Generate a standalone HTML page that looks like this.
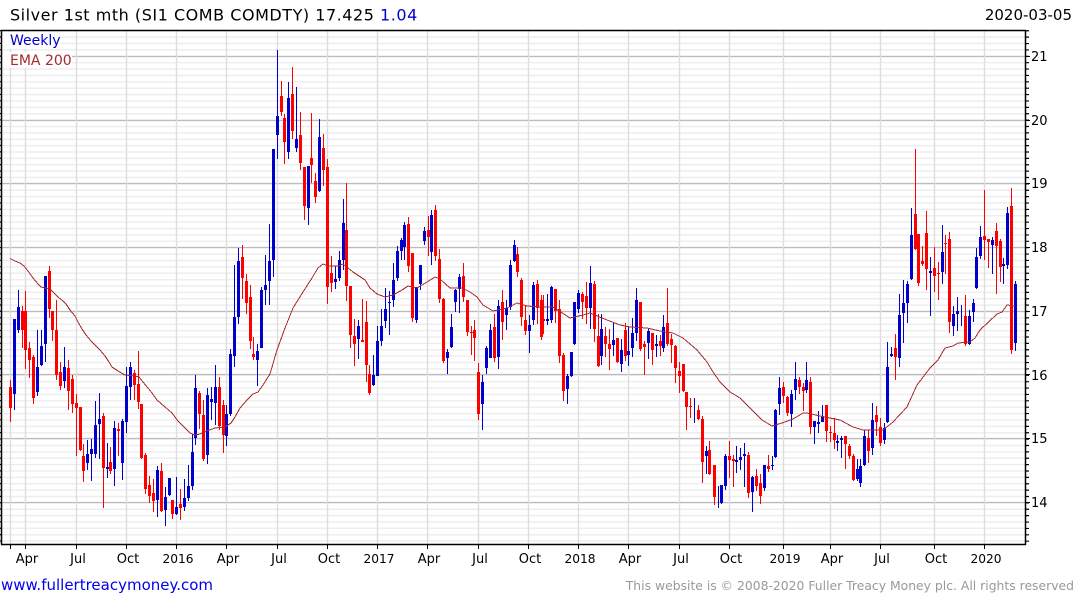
<!DOCTYPE html>
<html><head><meta charset="utf-8"><style>
html,body{margin:0;padding:0;background:#fff;width:1075px;height:600px;overflow:hidden}
svg{display:block}
text{font-family:"DejaVu Sans",sans-serif}
</style></head><body>
<svg width="1075" height="600" viewBox="0 0 1075 600" xmlns="http://www.w3.org/2000/svg">
<rect width="1075" height="600" fill="#fff"/>
<line x1="513.5" x2="513.5" y1="30.03" y2="544" stroke="#eee" stroke-width="1024" stroke-dasharray="1.5 4.88"/>
<path d="M2 56.5H1025M2 120.5H1025M2 183.5H1025M2 247.5H1025M2 311.5H1025M2 374.5H1025M2 438.5H1025M2 502.5H1025" stroke="#bbb" stroke-width="1.2" fill="none"/>
<path d="M10.5 31V544M25.5 31V544M76.5 31V544M126.5 31V544M176.5 31V544M226.5 31V544M277.5 31V544M327.5 31V544M377.5 31V544M427.5 31V544M478.5 31V544M528.5 31V544M578.5 31V544M628.5 31V544M679.5 31V544M729.5 31V544M783.5 31V544M830.5 31V544M880.5 31V544M934.5 31V544M984.5 31V544" stroke="#ddd" stroke-width="1.4" fill="none"/>

<g fill="none" stroke="#0000cc" stroke-width="1">
<path d="M14.5 319V410M18.5 290V333M37.5 330V396M41.5 330V366M45.5 276V362M64.5 347V388M87.5 440V470M91.5 439V481M95.5 401V458M99.5 393V459M107.5 443V478M114.5 421V486M122.5 419V480M126.5 367V433M130.5 362V400M157.5 466V517M165.5 487V526M169.5 478V496M176.5 477V515M184.5 479V511M188.5 465V501M192.5 434V490M195.5 375V445M207.5 388V464M211.5 387V420M215.5 365V425M226.5 405V446M230.5 349V416M234.5 265V367M238.5 248V324M257.5 344V386M261.5 287V348M265.5 255V305M269.5 224V305M273.5 149V277M277.5 50V159M288.5 82V159M296.5 87V152M308.5 166V225M319.5 119V192M335.5 266V289M339.5 251V281M343.5 199V270M358.5 320V359M373.5 355V386M377.5 326V376M381.5 309V346M385.5 288V328M389.5 291V335M393.5 263V307M397.5 246V281M401.5 238V260M404.5 222V260M416.5 287V323M420.5 265V290M424.5 227V245M431.5 210V265M447.5 349V374M451.5 314V348M455.5 289V312M459.5 274V313M482.5 375V430M486.5 346V374M490.5 324V358M498.5 300V369M506.5 300V330M510.5 260V310M514.5 240V262M529.5 315V353M533.5 282V325M547.5 294V325M551.5 286V323M567.5 374V404M571.5 352V377M574.5 302V345M578.5 290V313M590.5 266V329M601.5 314V365M613.5 323V356M621.5 339V372M628.5 327V366M632.5 318V357M636.5 288V341M648.5 329V359M656.5 335V357M663.5 315V352M694.5 398V423M706.5 446V474M718.5 486V508M721.5 485V504M725.5 454V490M736.5 446V473M740.5 448V470M744.5 443V487M752.5 476V512M764.5 465V491M772.5 456V470M775.5 409V458M779.5 377V415M791.5 390V427M795.5 362V400M806.5 362V393M814.5 421V444M818.5 411V433M822.5 405V422M837.5 435V451M841.5 436V458M857.5 459V481M860.5 459V487M864.5 430V466M872.5 403V455M884.5 423V444M887.5 342V423M891.5 347V357M899.5 294V367M903.5 280V343M907.5 281V323M911.5 208V280M930.5 257V316M942.5 225V284M953.5 306V336M957.5 297V331M961.5 305V326M969.5 310V345M973.5 299V322M976.5 248V289M980.5 226V259M992.5 237V274M1003.5 258V284M1007.5 207V269M1015.5 281V351"/>
</g>
<g fill="none" stroke="#ff0000" stroke-width="1">
<path d="M10.5 380V422M22.5 306V348M25.5 291V369M29.5 342V378M33.5 355V404M49.5 266V318M52.5 311V341M56.5 300V380M60.5 362V390M68.5 360V410M72.5 375V413M76.5 394V456M80.5 407V451M83.5 444V482M103.5 413V508M110.5 447V474M118.5 423V456M134.5 370V400M138.5 351V409M141.5 404V459M145.5 453V494M149.5 476V503M153.5 479V512M161.5 463V512M172.5 500V519M180.5 489V520M199.5 391V429M203.5 400V461M219.5 377V430M223.5 400V453M242.5 245V299M246.5 274V314M250.5 285V349M253.5 337V360M281.5 81V116M284.5 114V164M292.5 67V139M300.5 112V170M304.5 167V220M311.5 113V183M315.5 173V203M323.5 134V186M327.5 159V304M331.5 256V292M346.5 183V301M350.5 286V348M354.5 319V366M362.5 299V342M366.5 301V382M369.5 365V395M408.5 217V272M412.5 253V322M428.5 216V256M435.5 205V261M439.5 249V303M443.5 298V363M463.5 263V302M467.5 300V336M471.5 326V355M474.5 320V361M478.5 363V420M494.5 314V362M502.5 290V340M517.5 247V277M521.5 278V326M525.5 305V335M537.5 280V324M541.5 295V340M543.5 295V334M555.5 289V323M559.5 300V363M563.5 353V401M582.5 292V319M586.5 282V324M594.5 281V342M598.5 314V367M605.5 327V357M609.5 329V370M617.5 338V363M625.5 323V361M640.5 302V351M644.5 341V375M652.5 333V365M660.5 335V356M667.5 288V346M671.5 334V363M675.5 345V383M679.5 362V393M683.5 364V392M686.5 392V430M690.5 398V418M698.5 405V420M702.5 416V483M709.5 441V475M714.5 465V505M729.5 441V478M733.5 455V487M748.5 452V498M756.5 469V491M760.5 474V504M768.5 455V472M783.5 382V403M787.5 396V416M799.5 377V394M803.5 383V411M810.5 377V434M826.5 405V442M830.5 426V442M834.5 418V449M845.5 436V469M849.5 444V459M853.5 454V481M868.5 430V463M876.5 406V436M880.5 418V446M895.5 334V380M915.5 149V250M918.5 234V286M922.5 246V266M926.5 211V290M934.5 247V292M938.5 262V300M945.5 235V274M949.5 232V333M965.5 295V346M984.5 190V260M988.5 239V268M996.5 223V294M1000.5 239V282M1011.5 188V354"/>
</g>
<g fill="none" stroke="#0000cc" stroke-width="3">
<path d="M14.5 319V394M18.5 307V330M37.5 367V392M41.5 346V365M45.5 276V344M64.5 367V381M87.5 454V463M91.5 449V454M95.5 425V454M99.5 419V424M107.5 467V469M114.5 428V469M122.5 421V463M126.5 386V422M130.5 367V387M157.5 470V500M165.5 497V510M169.5 478V495M176.5 507V514M184.5 498V507M188.5 486V498M192.5 452V486M195.5 388V438M207.5 395V455M211.5 399V402M215.5 387V403M226.5 414V436M230.5 354V414M234.5 317V356M238.5 261V317M257.5 351V360M261.5 290V348M265.5 285V290M269.5 261V281M273.5 149V260M277.5 116V135M288.5 98V152M296.5 139V148M308.5 166V208M319.5 137V191M335.5 279V282M339.5 260V278M343.5 223V260M358.5 326V339M373.5 375V385M377.5 341V376M381.5 326V341M385.5 309V321M389.5 302V303M393.5 280V300M397.5 251V278M401.5 240V251M404.5 225V247M416.5 287V320M420.5 265V284M424.5 231V241M431.5 215V252M447.5 352V358M451.5 327V347M455.5 290V302M459.5 277V289M482.5 382V404M486.5 348V368M490.5 330V358M498.5 306V357M506.5 308V315M510.5 265V307M514.5 245V261M529.5 325V331M533.5 285V320M547.5 319V321M551.5 287V320M567.5 376V389M571.5 352V376M574.5 302V344M578.5 293V309M590.5 283V308M601.5 329V356M613.5 340V345M621.5 350V364M628.5 351V355M632.5 333V348M636.5 300V333M648.5 331V343M656.5 344V346M663.5 327V348M706.5 451V456M721.5 485V503M725.5 456V486M736.5 460V462M740.5 457V460M744.5 454V456M752.5 477V492M764.5 465V488M772.5 465V466M775.5 410V457M779.5 388V404M791.5 394V414M795.5 379V390M806.5 380V390M814.5 421V427M818.5 422V424M822.5 416V422M837.5 441V443M841.5 438V440M857.5 469V479M860.5 466V483M864.5 436V465M872.5 420V448M884.5 428V440M887.5 367V422M891.5 354V356M899.5 315V358M903.5 303V313M907.5 284V303M911.5 235V279M930.5 271V273M942.5 252V272M953.5 314V326M957.5 311V314M969.5 316V344M973.5 303V312M976.5 257V288M980.5 237V256M992.5 240V245M1003.5 264V266M1007.5 213V265M1015.5 284V343"/>
</g>
<g fill="none" stroke="#ff0000" stroke-width="3">
<path d="M10.5 387V408M22.5 311V330M25.5 311V350M29.5 348V360M33.5 357V398M49.5 271V309M52.5 311V330M56.5 330V375M60.5 372V386M68.5 368V391M72.5 379V404M76.5 403V408M80.5 407V450M83.5 456V471M103.5 416V468M110.5 462V471M118.5 429V431M134.5 373V385M138.5 384V402M141.5 404V458M145.5 455V489M149.5 485V496M153.5 493V501M161.5 471V511M172.5 500V514M180.5 504V508M199.5 393V414M203.5 415V459M219.5 387V426M223.5 405V435M242.5 257V278M246.5 281V303M250.5 297V341M253.5 354V357M281.5 96V112M284.5 118V142M292.5 94V131M300.5 135V163M304.5 167V206M311.5 158V165M315.5 181V197M323.5 148V170M327.5 167V287M331.5 273V283M346.5 230V286M350.5 286V335M354.5 336V344M362.5 340V342M366.5 322V365M369.5 374V393M408.5 224V266M412.5 253V318M428.5 230V237M435.5 210V256M439.5 259V299M443.5 299V361M463.5 276V297M467.5 300V332M471.5 332V333M474.5 330V338M478.5 372V414M494.5 327V358M502.5 302V322M517.5 254V272M521.5 280V317M525.5 320V331M537.5 284V308M541.5 300V337M543.5 319V321M555.5 289V311M559.5 309V356M563.5 355V391M582.5 294V302M586.5 296V308M594.5 284V329M598.5 336V366M605.5 336V344M609.5 344V349M617.5 338V362M625.5 330V356M640.5 302V349M644.5 344V347M652.5 333V350M660.5 341V346M667.5 323V344M671.5 339V345M675.5 346V368M679.5 371V376M683.5 364V391M686.5 392V407M690.5 406V407M698.5 410V419M702.5 419V462M709.5 450V474M714.5 465V497M729.5 456V460M733.5 459V461M748.5 455V493M756.5 476V486M760.5 483V496M768.5 466V469M783.5 387V396M787.5 397V413M799.5 380V387M803.5 387V391M810.5 382V427M826.5 405V431M830.5 432V433M834.5 433V440M845.5 436V444M849.5 446V456M853.5 456V480M868.5 438V451M876.5 415V422M880.5 427V443M895.5 348V357M915.5 214V249M918.5 234V283M922.5 261V264M926.5 233V269M934.5 268V276M938.5 273V274M945.5 243V244M949.5 239V322M965.5 316V344M984.5 236V240M988.5 239V242M996.5 231V246M1000.5 241V267M1011.5 206V350"/>
</g>
<polyline fill="none" stroke="#a52a2a" stroke-width="1" shape-rendering="crispEdges" points="10,258.5 15,261 20,263 24,266 28,271 33,278 38,284 41,287 45,288 50,289 54,293 58,297 63,301 66,304 70,310 75,316 78,322 82,329 86,335 91,341 96,346 100,350 105,356 109,362 112,367 118,371 125,375 135,376 139,377 143,382 148,388 152,393 157,400 165,407 172,413 178,421 185,428 190,433 195,435 200,434 207,431 215,428 225,427 231,423 235,417 240,408 247,400 253,394 258,392 263,385 270,374 277,350 285,328 293,308 303,292 312,278 318,268 323,264 328,266 338,266 343,264 353,272 365,280 370,288 377,294 385,297 393,295 402,290 408,286 417,288 427,282 435,277 440,279 450,288 462,288 470,292 477,297 483,305 493,311 507,308 517,303 527,306 540,307 553,307 570,318 583,315 590,313 607,320 620,325 630,327 647,328 660,331 673,333 683,338 697,350 707,362 713,372 720,382 730,392 740,398 750,408 762,420 772,426 782,423 793,419 803,413 807,413 820,416 840,420 853,427 863,430 883,430 893,422 907,407 917,385 930,368 938,360 945,348 953,346 958,343 970,342 975,338 980,330 997,314 1002,312 1007,305 1015,306"/>

<rect x="2" y="32" width="58" height="17" fill="#fff"/>
<rect x="2" y="52" width="70" height="16" fill="#fff"/>

<path d="M1.5 30V544.5M1 30.5H1026M1025.5 30V545M1 544.5H1026" stroke="#000" stroke-width="1.5" fill="none"/>
<line x1="0.5" x2="0.5" y1="30.03" y2="544" stroke="#000" stroke-width="1.5" stroke-dasharray="1.2 5.18"/>
<line x1="1027.5" x2="1027.5" y1="30.18" y2="544" stroke="#000" stroke-width="3" stroke-dasharray="1.2 5.18"/>
<path d="M1026 56.5H1030M1026 120.5H1030M1026 183.5H1030M1026 247.5H1030M1026 311.5H1030M1026 374.5H1030M1026 438.5H1030M1026 502.5H1030" stroke="#000" stroke-width="1" fill="none"/>
<path d="M10.5 544V549M25.5 544V549M76.5 544V549M126.5 544V549M176.5 544V549M226.5 544V549M277.5 544V549M327.5 544V549M377.5 544V549M427.5 544V549M478.5 544V549M528.5 544V549M578.5 544V549M628.5 544V549M679.5 544V549M729.5 544V549M783.5 544V549M830.5 544V549M880.5 544V549M934.5 544V549M984.5 544V549" stroke="#000" stroke-width="1" fill="none"/>

<text x="10" y="20.5" font-size="16" letter-spacing="0.53" fill="#000">Silver 1st mth (SI1 COMB COMDTY) 17.425 <tspan fill="#0000cc">1.04</tspan></text>
<text x="1072" y="20" font-size="15" fill="#000" text-anchor="end">2020-03-05</text>
<text x="10" y="45" font-size="14" fill="#0000cc">Weekly</text>
<text x="10" y="65" font-size="14" fill="#a52a2a">EMA 200</text>

<g font-size="13" fill="#000">
<text x="1031" y="61">21</text><text x="1031" y="125">20</text><text x="1031" y="188">19</text><text x="1031" y="252">18</text><text x="1031" y="316">17</text><text x="1031" y="380">16</text><text x="1031" y="443">15</text><text x="1031" y="507">14</text>
</g>
<g font-size="13" fill="#000" text-anchor="middle">
<text x="27" y="563">Apr</text><text x="78" y="563">Jul</text><text x="128" y="563">Oct</text><text x="178" y="563" font-size="12.2">2016</text><text x="228" y="563">Apr</text><text x="279" y="563">Jul</text><text x="329" y="563">Oct</text><text x="379" y="563" font-size="12.2">2017</text><text x="429" y="563">Apr</text><text x="480" y="563">Jul</text><text x="530" y="563">Oct</text><text x="580" y="563" font-size="12.2">2018</text><text x="630" y="563">Apr</text><text x="681" y="563">Jul</text><text x="731" y="563">Oct</text><text x="785" y="563" font-size="12.2">2019</text><text x="832" y="563">Apr</text><text x="882" y="563">Jul</text><text x="936" y="563">Oct</text><text x="986" y="563" font-size="12.2">2020</text>
</g>
<text x="1" y="590" font-size="15" fill="#0000ee">www.fullertreacymoney.com</text>
<text x="1074" y="590" font-size="12.38" fill="#999" text-anchor="end">This website is © 2008-2020 Fuller Treacy Money plc. All rights reserved</text>
</svg>
</body></html>
